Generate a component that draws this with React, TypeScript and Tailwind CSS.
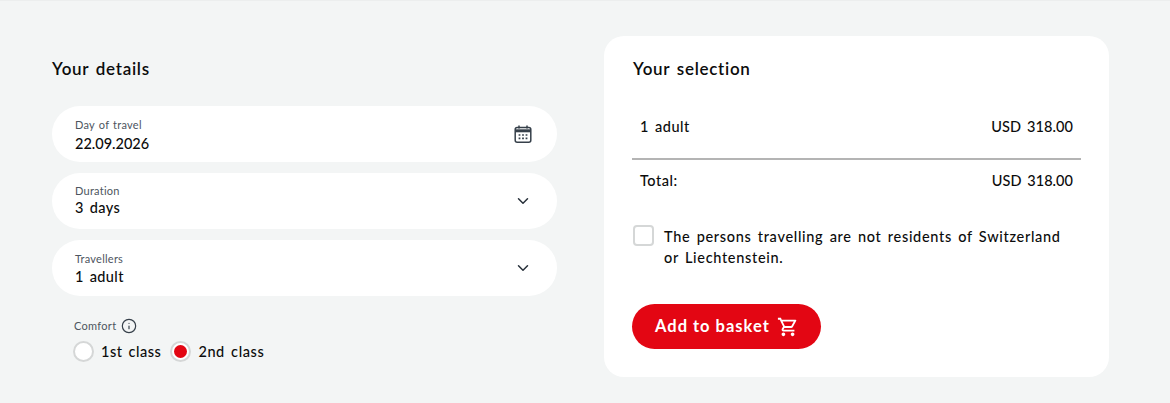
import React from 'react';
import { Info, ChevronDown } from 'lucide-react';
import { MdOutlineShoppingCart } from 'react-icons/md';

function CalendarIcon() {
  return (
    <svg width="18" height="18" viewBox="0 0 18 18" fill="none" stroke="#36404a" strokeWidth="1.5" className="mt-[-1px]">
      <rect x="1.2" y="2.4" width="15.6" height="14.8" rx="2" />
      <path d="M1.2 5.8h15.6" strokeWidth="3" />
      <path d="M5 .6v3M13 .6v3" />
      <path d="M4.6 10h1.8M8.1 10h1.8M11.6 10h1.8M4.6 13.4h1.8M8.1 13.4h1.8M11.6 13.4h1.8" strokeWidth="1.6" />
    </svg>
  );
}

function Field({ label, value, icon, valueClass, textClass }: { label: string; value: string; icon: React.ReactNode; valueClass: string; textClass: string }) {
  return (
    <div className="flex h-[56px] items-center justify-between rounded-[28px] bg-white pl-[23px] pr-[25px]">
      <div className={`flex flex-col ${textClass}`}>
        <span className="text-[11px] leading-[14px] tracking-[0.25px] text-[#4d5560] [word-spacing:1px]">{label}</span>
        <span className={`text-[14.5px] font-medium leading-[19px] text-[#0c0c0c] ${valueClass}`}>{value}</span>
      </div>
      {icon}
    </div>
  );
}

export default function App() {
  return (
    <div className="flex h-[403px] w-[1170px] gap-[47px] overflow-hidden border-t border-[#eceeee] bg-[#f3f5f5] pl-[52px] pt-[35px] font-['Lato',sans-serif] text-[#0c0c0c] [word-spacing:2px]">
      {/* left column */}
      <div className="w-[505px]">
        <h2 className="mt-[23px] text-[17px] font-semibold leading-[20px] tracking-[0.7px] text-[#0c0c0c]">Your details</h2>
        <div className="mt-[27px] flex flex-col gap-[11px]">
          <Field label="Day of travel" value="22.09.2026" textClass="pt-[2px]" valueClass="pt-[2px] tracking-[0px]" icon={<CalendarIcon />} />
          <Field label="Duration" value="3 days" textClass="pb-[2px]" valueClass="tracking-[0.35px]" icon={<ChevronDown size={18} strokeWidth={2} color="#27303a" />} />
          <Field label="Travellers" value="1 adult" textClass="pt-[1px]" valueClass="pt-[1px] tracking-[0.35px]" icon={<ChevronDown size={18} strokeWidth={2} color="#27303a" />} />
        </div>
        <div className="mt-[22px] pl-[22px]">
          <div className="flex items-center gap-[5px]">
            <span className="text-[11px] leading-[16px] tracking-[0.3px] text-[#4d5560]">Comfort</span>
            <Info size={16} strokeWidth={1.8} color="#36404a" />
          </div>
          <div className="mt-[7px] ml-[-1px] flex items-center">
            <span className="h-[21px] w-[21px] rounded-full border-2 border-[#d5d7d7] bg-white" />
            <span className="ml-[7px] text-[14.5px] font-medium leading-[20px] tracking-[0.5px]">1st class</span>
            <span className="ml-[9px] flex h-[21px] w-[21px] items-center justify-center rounded-full border-2 border-[#d5d7d7] bg-white">
              <span className="h-[13px] w-[13px] rounded-full bg-[#e30613]" />
            </span>
            <span className="ml-[7px] text-[14.5px] font-medium leading-[20px] tracking-[0.6px]">2nd class</span>
          </div>
        </div>
      </div>

      {/* right card */}
      <div className="h-[341px] w-[505px] rounded-[20px] bg-white px-[28px] pt-[23px]">
        <h2 className="pl-px text-[17px] font-semibold leading-[20px] tracking-[0.7px]">Your selection</h2>
        <div className="mt-[38px] flex justify-between px-[8px] text-[14.5px] font-medium leading-[20px] tracking-[0.5px]">
          <span>1 adult</span>
          <span className="tracking-[0.1px]">USD 318.00</span>
        </div>
        <div className="mt-[21px] h-[2px] bg-[#b4b4b4]" />
        <div className="mt-[11px] flex justify-between px-[8px] text-[14.5px] font-medium leading-[20px] tracking-[0.5px]">
          <span>Total:</span>
          <span className="tracking-[0.05px]">USD 318.00</span>
        </div>
        <div className="mt-[35px] flex gap-[10px] pl-px">
          <span className="mt-[-1px] h-[21px] w-[21px] shrink-0 rounded-[4px] border-2 border-[#d5d7d7] bg-white" />
          <p className="whitespace-nowrap text-[14.5px] font-medium leading-[21px] tracking-[0.68px]">
            The persons travelling are not residents of Switzerland
            <br />
            or Liechtenstein.
          </p>
        </div>
        <button className="mt-[36px] flex h-[45px] w-[189px] items-center gap-[7px] rounded-full bg-[#e30613] pl-[23px] text-[16.5px] font-bold tracking-[1px] text-white">
          Add to basket
          <MdOutlineShoppingCart size={22} color="#ffffff" />
        </button>
      </div>
    </div>
  );
}
